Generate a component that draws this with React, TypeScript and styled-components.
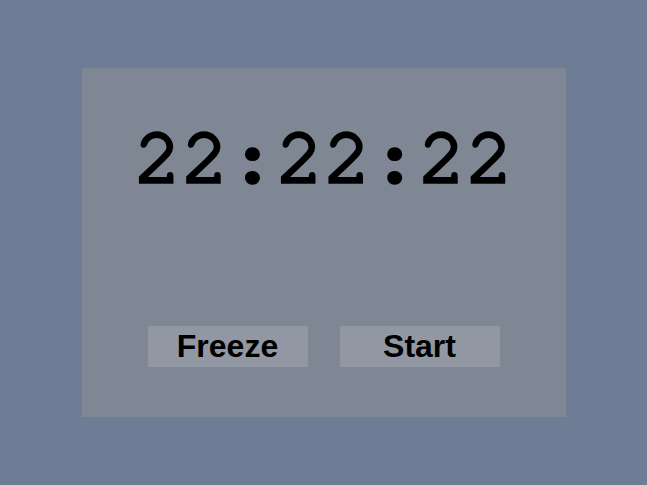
import React from 'react';
import styled, { createGlobalStyle } from 'styled-components';

const GlobalStyle = createGlobalStyle`
  html, body {
    margin: 0;
    padding: 0;
    background: #6e7d95;
  }
`;

const Page = styled.div`
  min-height: 100vh;
  display: flex;
  align-items: center;
  justify-content: center;
`;

const Panel = styled.div`
  width: 484px;
  height: 349px;
  background: #7f8794;
  display: flex;
  flex-direction: column;
  align-items: center;
  box-sizing: border-box;
  padding-top: 51px;
`;

const Clock = styled.div`
  font-family: 'FreeMono', 'Liberation Mono', monospace;
  font-weight: normal;
  font-size: 79px;
  line-height: 80px;
  color: #000;
  -webkit-text-stroke: 3.4px #000;
`;

const Controls = styled.div`
  display: flex;
  gap: 32px;
  margin-top: 127px;
`;

const Button = styled.button`
  width: 160px;
  height: 41px;
  border: none;
  padding: 0;
  background: #9198a3;
  color: #000;
  font-family: 'Liberation Sans', Arial, sans-serif;
  font-weight: bold;
  font-size: 32px;
  cursor: pointer;
`;

export default function App() {
  return (
    <Page>
      <GlobalStyle />
      <Panel>
        <Clock>22:22:22</Clock>
        <Controls>
          <Button>Freeze</Button>
          <Button>Start</Button>
        </Controls>
      </Panel>
    </Page>
  );
}
